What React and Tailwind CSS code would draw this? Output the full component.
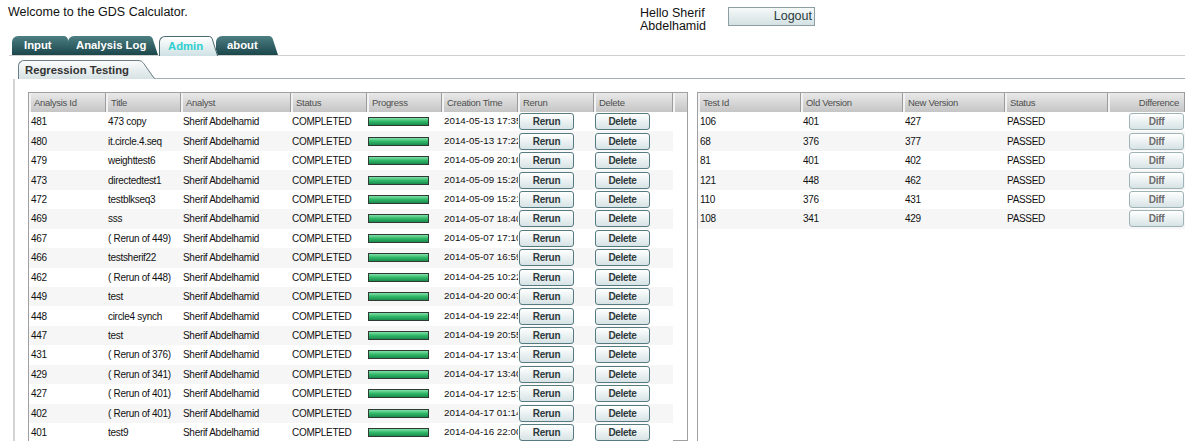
import React from "react";

const analyses = [
  ["481", "473 copy", "2014-05-13 17:35:08"],
  ["480", "it.circle.4.seq", "2014-05-13 17:22:41"],
  ["479", "weighttest6", "2014-05-09 20:10:13"],
  ["473", "directedtest1", "2014-05-09 15:28:55"],
  ["472", "testblkseq3", "2014-05-09 15:21:30"],
  ["469", "sss", "2014-05-07 18:40:02"],
  ["467", "( Rerun of 449)", "2014-05-07 17:10:47"],
  ["466", "testsherif22", "2014-05-07 16:59:19"],
  ["462", "( Rerun of 448)", "2014-04-25 10:22:36"],
  ["449", "test", "2014-04-20 00:47:11"],
  ["448", "circle4 synch", "2014-04-19 22:45:50"],
  ["447", "test", "2014-04-19 20:55:27"],
  ["431", "( Rerun of 376)", "2014-04-17 13:47:04"],
  ["429", "( Rerun of 341)", "2014-04-17 13:40:38"],
  ["427", "( Rerun of 401)", "2014-04-17 12:57:16"],
  ["402", "( Rerun of 401)", "2014-04-17 01:14:29"],
  ["401", "test9", "2014-04-16 22:00:45"],
];

const tests = [
  ["106", "401", "427"],
  ["68", "376", "377"],
  ["81", "401", "402"],
  ["121", "448", "462"],
  ["110", "376", "431"],
  ["108", "341", "429"],
];

function DarkSlant() {
  return (
    <svg width="10" height="19" viewBox="0 0 10 19" className="block shrink-0">
      <defs>
        <linearGradient id="darkTab" x1="0" y1="0" x2="0" y2="1">
          <stop offset="0" stopColor="#4d7f83" />
          <stop offset="1" stopColor="#1b474b" />
        </linearGradient>
      </defs>
      <path d="M0 0 H1.5 Q3.6 0 4.6 2.6 L10 19 H0 Z" fill="url(#darkTab)" />
    </svg>
  );
}

function DarkTab({ label, body, wrap }) {
  return (
    <div className={wrap}>
      <div className={body}>{label}</div>
      <DarkSlant />
    </div>
  );
}

function ActiveTab() {
  return (
    <div className="relative z-10 flex h-[20px] -mb-px ml-px items-start">
      <div className="h-[20px] w-[49px] rounded-tl-[6px] border-l border-t border-[#4b6a70] bg-gradient-to-b from-white to-[#cfe1e4] pl-[8px] pt-[2px] text-[11.3px] font-bold leading-[15px] text-[#2fcfcf]">
        Admin
      </div>
      <svg width="10" height="20" viewBox="0 0 10 20" className="block shrink-0">
        <defs>
          <linearGradient id="activeTab" x1="0" y1="0" x2="0" y2="1">
            <stop offset="0" stopColor="#ffffff" />
            <stop offset="1" stopColor="#cfe1e4" />
          </linearGradient>
        </defs>
        <path d="M0 0 H1.5 Q3.6 0 4.6 2.6 L10 20 H0 Z" fill="url(#activeTab)" />
        <path d="M0 0.5 H1.5 Q3.4 0.5 4.2 2.8 L9.6 20" fill="none" stroke="#4b6a70" strokeWidth="1" />
      </svg>
    </div>
  );
}

function HeadCell({ w, children, right }) {
  return (
    <div
      className={`${w} h-full shrink-0 overflow-hidden whitespace-nowrap border-l-2 border-r border-l-[#f2f2f2] border-r-[#9c9c9c] pl-[3px] ${right ? "pr-[5px] text-right" : ""}`}
    >
      {children}
    </div>
  );
}

function Btn({ label, muted }) {
  return (
    <div
      className={`flex h-[17px] w-[55px] items-center justify-center rounded-[3px] border bg-gradient-to-b from-white to-[#d7e3e5] text-[10px] font-bold tracking-[-0.3px] ${
        muted ? "border-[#9fb3b7] text-[#6d6d6d]" : "border-[#557a80] text-[#2f3a3d]"
      }`}
    >
      {label}
    </div>
  );
}

function Progress() {
  return (
    <div className="h-[9px] w-[61px] border border-[#2e3a33] bg-gradient-to-b from-[#7fe0a8] via-[#2fb868] to-[#1b8a4c]" />
  );
}

export default function App() {
  return (
    <div className="h-[441px] w-[1185px] overflow-hidden bg-white font-['Liberation_Sans',Arial,sans-serif] text-[#111]">
      {/* top bar */}
      <div className="flex h-[36px]">
        <div className="w-[640px] pl-[8px] pt-[5px] text-[12.5px] leading-[15px]">Welcome to the GDS Calculator.</div>
        <div className="w-[88px] pt-[7px] text-[12.5px] leading-[13px]">
          <div>Hello Sherif</div>
          <div>Abdelhamid</div>
        </div>
        <div className="mt-[7px] flex h-[19px] w-[87px] items-center justify-end border border-[#8d9ea3] bg-gradient-to-b from-[#f6f9f9] to-[#d4e1e3] pr-[2px] text-[12.5px] text-[#2a3b40]">
          Logout
        </div>
      </div>

      {/* main tabs */}
      <div className="ml-[9px] flex h-[20px] items-end border-b border-[#cfcfcf]">
        <DarkTab
          wrap="relative z-0 ml-[3px] flex h-[19px]"
          body="h-[19px] w-[51px] rounded-tl-[6px] bg-gradient-to-b from-[#4d7f83] to-[#1b474b] pl-[12px] pt-[2px] text-[11.3px] font-bold leading-[15px] text-white"
          label="Input"
        />
        <DarkTab
          wrap="relative z-[1] -ml-[5px] flex h-[19px]"
          body="h-[19px] w-[80px] rounded-tl-[6px] bg-gradient-to-b from-[#4d7f83] to-[#1b474b] pl-[8px] pt-[2px] text-[11.3px] font-bold leading-[15px] text-white"
          label="Analysis Log"
        />
        <ActiveTab />
        <DarkTab
          wrap="relative z-[2] -ml-[2px] flex h-[19px]"
          body="h-[19px] w-[52px] rounded-tl-[6px] bg-gradient-to-b from-[#4d7f83] to-[#1b474b] pl-[11px] pt-[2px] text-[11.3px] font-bold leading-[15px] text-white"
          label="about"
        />
      </div>

      {/* sub tabs */}
      <div className="mt-[4px] flex h-[19px] items-end pl-[18px]">
        <div className="flex h-[19px] items-start">
          <div className="h-[19px] w-[118px] rounded-tl-[6px] border-l border-t border-[#6a7f87] bg-gradient-to-b from-[#fbfbfb] to-[#d6e2e4] pl-[6px] pt-[2px] text-[11.3px] font-bold leading-[15px] text-[#333]">
            Regression Testing
          </div>
          <svg width="19" height="19" viewBox="0 0 19 19" className="block shrink-0">
            <defs>
              <linearGradient id="subTab" x1="0" y1="0" x2="0" y2="1">
                <stop offset="0" stopColor="#fbfbfb" />
                <stop offset="1" stopColor="#d6e2e4" />
              </linearGradient>
            </defs>
            <path d="M0 0 H3 Q6 0 8 3 L17 16 Q19 18.5 19 18.5 L19 19 H0 Z" fill="url(#subTab)" />
            <path d="M0 0.5 H3 Q5.6 0.5 7.6 3.3 L16.5 16 Q18 18.5 19 18.5" fill="none" stroke="#6a7f87" strokeWidth="1" />
          </svg>
        </div>
        <div className="h-full flex-1 border-b border-[#a4afb4]" />
      </div>

      {/* panel */}
      <div className="ml-[13px] flex h-[362px] border-l-2 border-[#d4d4d4] pl-[13px] pt-[13px]">
        {/* analyses table */}
        <div className="w-[660px] shrink-0 border border-[#a0a0a0] text-[10px] tracking-[-0.3px]">
          <div className="flex h-[19px] items-center bg-gradient-to-b from-[#e9e9e9] to-[#c5c5c5] text-[9.5px] leading-[19px] text-[#4f4f4f]">
            <HeadCell w="w-[77px]">Analysis Id</HeadCell>
            <HeadCell w="w-[75px]">Title</HeadCell>
            <HeadCell w="w-[110px]">Analyst</HeadCell>
            <HeadCell w="w-[76px]">Status</HeadCell>
            <HeadCell w="w-[75px]">Progress</HeadCell>
            <HeadCell w="w-[76px]">Creation Time</HeadCell>
            <HeadCell w="w-[76px]">Rerun</HeadCell>
            <HeadCell w="w-[79px]">Delete</HeadCell>
            <div className="h-full flex-1 border-l-2 border-[#f2f2f2]" />
          </div>
          {analyses.map(([id, title, time], i) => (
            <div key={id} className="flex h-[19.44px] items-center">
              <div className={`flex h-full w-[644px] items-center ${i % 2 ? "bg-[#f6f6f6]" : "bg-white"}`}>
                <div className="w-[77px] shrink-0 pl-[2px]">{id}</div>
                <div className="w-[75px] shrink-0 overflow-hidden whitespace-nowrap pl-[2px]">{title}</div>
                <div className="w-[110px] shrink-0 pl-[2px]">Sherif Abdelhamid</div>
                <div className="w-[76px] shrink-0 pl-[1px]">COMPLETED</div>
                <div className="w-[75px] shrink-0 pl-[1px]">
                  <Progress />
                </div>
                <div className="w-[76px] shrink-0 overflow-hidden whitespace-nowrap pl-[2px] text-[9.8px] tracking-normal">{time}</div>
                <div className="w-[76px] shrink-0 pl-[1px]">
                  <Btn label="Rerun" />
                </div>
                <div className="w-[79px] shrink-0 pl-[1px]">
                  <Btn label="Delete" />
                </div>
              </div>
            </div>
          ))}
        </div>

        {/* regression results table */}
        <div className="ml-[9px] flex-1 border-l border-t border-[#a0a0a0] text-[10px] tracking-[-0.3px]">
          <div className="flex h-[19px] items-center bg-gradient-to-b from-[#e9e9e9] to-[#c5c5c5] text-[9.5px] leading-[19px] text-[#4f4f4f]">
            <HeadCell w="w-[103px]">Test Id</HeadCell>
            <HeadCell w="w-[102px]">Old Version</HeadCell>
            <HeadCell w="w-[102px]">New Version</HeadCell>
            <HeadCell w="w-[103px]">Status</HeadCell>
            <HeadCell w="flex-1" right>
              Difference
            </HeadCell>
          </div>
          {tests.map(([id, oldV, newV], i) => (
            <div key={id} className={`flex h-[19.44px] items-center ${i % 2 ? "bg-[#f6f6f6]" : "bg-white"}`}>
              <div className="w-[103px] shrink-0 pl-[2px]">{id}</div>
              <div className="w-[102px] shrink-0 pl-[2px]">{oldV}</div>
              <div className="w-[102px] shrink-0 pl-[2px]">{newV}</div>
              <div className="w-[103px] shrink-0 pl-[2px]">PASSED</div>
              <div className="flex flex-1 justify-end pr-[1px]">
                <Btn label="Diff" muted />
              </div>
            </div>
          ))}
        </div>
      </div>
    </div>
  );
}
